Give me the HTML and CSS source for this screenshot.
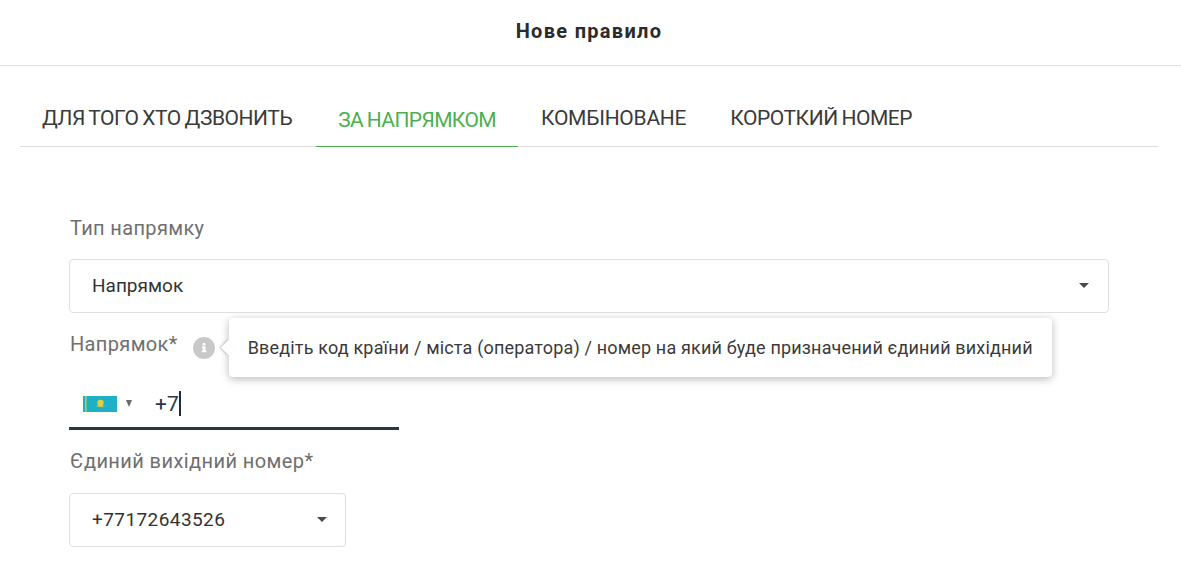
FILE: index.html
```html
<!DOCTYPE html>
<html lang="uk">
<head>
<meta charset="utf-8">
<title>Нове правило</title>
<link rel="stylesheet" href="styles.css">
</head>
<body>
<header class="header">Нове правило</header>
<nav class="tabs">
  <a class="tab tab-first">ДЛЯ ТОГО ХТО ДЗВОНИТЬ</a>
  <a class="tab tab-active">ЗА НАПРЯМКОМ</a>
  <a class="tab tab-third">КОМБІНОВАНЕ</a>
  <a class="tab">КОРОТКИЙ НОМЕР</a>
</nav>
<main class="form">
  <div class="label label-type">Тип напрямку</div>
  <div class="select select-wide"><span>Напрямок</span><i class="caret"></i></div>
  <div class="label-row">
    <span class="label">Напрямок*</span>
    <span class="info">
      <svg width="22" height="22" viewBox="0 0 22 22"><circle cx="11" cy="11" r="11" fill="#c8c8c8"/><rect x="9.500" y="6" width="3" height="2.400" rx="1" fill="#fff"/><path d="M8.800 9.300h3.700v4.300h.9v1.700H8.800v-1.700h.9v-2.600h-.9z" fill="#fff"/></svg>
      <span class="tooltip">Введіть код країни / міста (оператора) / номер на який буде призначений єдиний вихідний</span>
    </span>
  </div>
  <div class="phone">
    <svg class="flag" width="34" height="16" viewBox="0 0 34 16"><rect width="34" height="16" fill="#1fb0c8"/><rect x="2" width="1.600" height="16" fill="#c8c33c"/><circle cx="17.500" cy="7" r="3.200" fill="#e8cf3a"/><path d="M12 9.500q5.500 3.500 11 0q-5.500 1.500-11 0z" fill="#d9cf5a"/></svg>
    <i class="flag-caret"></i>
    <span class="phone-value">+7</span><i class="cursor"></i>
  </div>
  <div class="label label-single">Єдиний вихідний номер*</div>
  <div class="select select-small"><span>+77172643526</span><i class="caret"></i></div>
</main>
</body>
</html>
```
FILE: styles.css
```css
* { box-sizing: border-box; }
html, body { margin: 0; height: 100%; overflow: hidden; }
body { background: #fff; font-family: Roboto, "Liberation Sans", sans-serif; color: #2b2b2b; width: 1181px; height: 563px; }
.header { height: 66px; border-bottom: 1px solid #e2e2e2; display: flex; align-items: center; justify-content: center; font-size: 20px; font-weight: 700; color: #2b2b2b; padding: 0 3px 4px 0; letter-spacing: 1.300px; }
.tabs { display: flex; margin: 0 23px 0 20px; height: 81px; border-bottom: 1px solid #dedede; align-items: flex-end; }
.tab { font-size: 21px; letter-spacing: -0.450px; word-spacing: -1px; padding: 0 22px; height: 81px; display: flex; align-items: center; padding-top: 24px; margin-bottom: -1px; border-bottom: 1px solid transparent; color: #3a3a3a; white-space: nowrap; }
.tab-first { padding-top: 23px; }
.tab-active { color: #4caf50; border-bottom-color: #4caf50; padding-top: 27px; margin-left: 2px; letter-spacing: -0.620px; }
.tab-third { letter-spacing: -0.250px; margin-left: 1px; }
.form { padding: 0 72px 0 69px; }
.label { font-size: 20px; color: #6f6f6f; line-height: 24px; letter-spacing: 0.350px; padding-left: 1px; }
.label-type { margin-top: 69px; }
.select { height: 54px; border: 1px solid #dfdfdf; border-radius: 4px; display: flex; align-items: center; justify-content: space-between; font-size: 19px; color: #333; padding: 0 19px 0 22px; background: #fff; }
.select-wide { margin-top: 19px; padding-bottom: 2px; }
.select-small { width: 277px; margin-top: 20px; padding-right: 18px; padding-bottom: 2px; letter-spacing: 0.420px; }
.caret { width: 0; height: 0; border-left: 5.500px solid transparent; border-right: 5.500px solid transparent; border-top: 5.500px solid #4a4a4a; }
.label-row { display: flex; align-items: center; height: 24px; margin-top: 19px; }
.info { display: flex; margin-left: 15px; margin-top: 8px; position: relative; }
.tooltip { position: absolute; left: 36px; top: -19px; width: 823px; height: 59px; background: #fff; border-radius: 4px; box-shadow: 0 2px 8px rgba(0,0,0,.28); display: flex; align-items: center; padding-left: 19px; font-size: 18px; color: #3a3a3a; white-space: nowrap; letter-spacing: 0.170px; }
.tooltip::before { content: ""; position: absolute; left: -6px; top: 24px; width: 11px; height: 11px; background: #fff; transform: rotate(45deg); box-shadow: -1px 1px 2px rgba(0,0,0,.22); }
.phone { width: 330px; height: 56px; margin-top: 18px; border-bottom: 3px solid #2c3745; display: flex; align-items: center; padding-left: 14px; padding-top: 6px; color: #2c3745; font-size: 21px; }
.flag { display: block; }
.flag-caret { width: 0; height: 0; margin-left: 9px; border-left: 3.500px solid transparent; border-right: 3.500px solid transparent; border-top: 7px solid #6b6b6b; }
.phone-value { margin-left: 23px; }
.cursor { width: 2px; height: 25px; background: #1f2a38; }
.label-single { margin-top: 19px; letter-spacing: 0.420px; }
```
